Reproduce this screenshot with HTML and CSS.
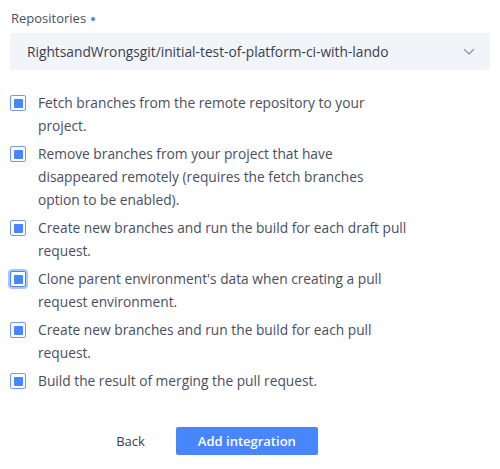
FILE: index.html
```html
<!DOCTYPE html>
<html>
<head>
<meta charset="utf-8">
<link rel="stylesheet" href="styles.css">
</head>
<body>
<div class="form">
  <div class="label">Repositories <span class="req"></span></div>
  <div class="select">
    <span class="select-text">RightsandWrongsgit/initial-test-of-platform-ci-with-lando</span>
    <svg class="chev" width="12" height="8" viewBox="0 0 12 8"><path d="M1.5 1.5 L6 6 L10.5 1.5" fill="none" stroke="#98a0b0" stroke-width="1.6" stroke-linecap="round" stroke-linejoin="round"/></svg>
  </div>
  <ul class="options">
    <li class="opt"><span class="box"><span class="fill"></span></span><span class="txt">Fetch branches from the remote repository to your project.</span></li>
    <li class="opt"><span class="box"><span class="fill"></span></span><span class="txt">Remove branches from your project that have disappeared remotely (requires the fetch branches option to be enabled).</span></li>
    <li class="opt"><span class="box"><span class="fill"></span></span><span class="txt">Create new branches and run the build for each draft pull request.</span></li>
    <li class="opt"><span class="box focus"><span class="fill"></span></span><span class="txt">Clone parent environment's data when creating a pull request environment.</span></li>
    <li class="opt"><span class="box"><span class="fill"></span></span><span class="txt">Create new branches and run the build for each pull request.</span></li>
    <li class="opt"><span class="box"><span class="fill"></span></span><span class="txt">Build the result of merging the pull request.</span></li>
  </ul>
  <div class="actions">
    <button class="btn-back">Back</button>
    <button class="btn-primary">Add integration</button>
  </div>
</div>
</body>
</html>
```
FILE: styles.css
```css
html, body { margin: 0; padding: 0; background: #fff; }
body { font-family: "Open Sans", "Noto Sans", sans-serif; color: #4a4e5c; }
.form { padding: 9px 10px 0 10px; width: 480px; }
.label { font-size: 13px; line-height: 18px; color: #4a4e5c; padding-left: 1px; display: flex; align-items: center; gap: 5px; }
.req { width: 4px; height: 4px; border-radius: 50%; background: #4786ff; display: inline-block; margin-top: 2px; }
.select { margin-top: 6px; height: 37px; background: #f1f4f8; border-radius: 2px; display: flex; align-items: center; justify-content: space-between; padding: 0 15px 0 17px; }
.select-text { font-size: 13.75px; color: #3a3e4c; }
.chev { display: block; }
.options { list-style: none; margin: 21px 0 0 0; padding: 0; max-width: 398px; }
.opt { display: flex; align-items: flex-start; gap: 12px; margin-bottom: 5px; }
.box { flex: none; width: 14px; height: 14px; border: 1px solid #6d9bff; border-radius: 2px; display: flex; align-items: center; justify-content: center; margin-top: 4px; background: #fff; }
.box.focus { box-shadow: 0 0 0 2px #a9c6ff; border-color: #4786ff; }
.fill { width: 9px; height: 9px; background: #4786ff; border-radius: 1px; }
.txt { font-size: 13.75px; line-height: 23px; color: #4a4e5c; }
.actions { display: flex; justify-content: center; align-items: center; gap: 31px; margin-top: 35px; padding-right: 66px; }
.btn-back { background: none; border: none; font-family: inherit; font-size: 13px; color: #3a3e4c; padding: 0; }
.btn-primary { background: #4786ff; color: #fff; border: none; border-radius: 2px; font-family: inherit; font-size: 13px; font-weight: 600; width: 142px; height: 28px; padding: 0; }
```
